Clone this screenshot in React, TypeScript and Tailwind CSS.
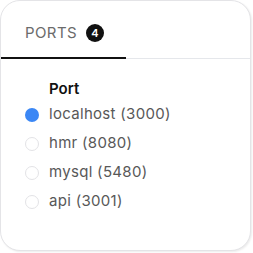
import React from 'react';

const ports = [
  { name: 'localhost', port: 3000, active: true },
  { name: 'hmr', port: 8080, active: false },
  { name: 'mysql', port: 5480, active: false },
  { name: 'api', port: 3001, active: false },
];

const App = () => {
  return (
    <div className="w-[253px] h-[253px] bg-white" style={{ fontFamily: 'Inter, "Noto Sans", sans-serif' }}>
      <div className="w-[251px] h-[251px] border border-[#e4e4e7] rounded-[20px] bg-white shadow-[1px_1px_2px_rgba(0,0,0,0.08)] overflow-hidden">
        <div className="flex border-b border-[#e5e7eb] mt-[8px]">
          <div className="flex items-center gap-[9px] pl-[24px] w-[125px] h-[50px] border-b-2 border-[#111] -mb-px">
            <span className="text-[15px] tracking-[0.4px] text-[#6b6b6b]">PORTS</span>
            <span className="w-[18px] h-[18px] rounded-full bg-[#111] text-white text-[11px] font-semibold flex items-center justify-center">4</span>
          </div>
        </div>
        <div className="pl-[24px] pt-[20px]">
          <div className="pl-[24px] text-[15px] font-semibold text-[#111] leading-[20px]">Port</div>
          <div className="flex flex-col mt-[1px]">
            {ports.map((p) => (
              <div key={p.name} className="flex items-center gap-[10px] h-[29px]">
                {p.active ? (
                  <span className="w-[14px] h-[14px] rounded-full bg-[#3b87f5]" />
                ) : (
                  <span className="w-[14px] h-[14px] rounded-full border border-[#e3e3e6] bg-white" />
                )}
                <span className="text-[15px] text-[#585858] tracking-[0.3px]">
                  {p.name} ({p.port})
                </span>
              </div>
            ))}
          </div>
        </div>
      </div>
    </div>
  );
};

export default App;
